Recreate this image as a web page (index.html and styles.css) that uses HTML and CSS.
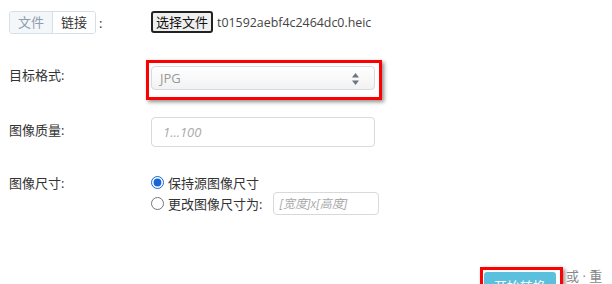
FILE: index.html
```html
<!DOCTYPE html>
<html lang="zh-CN">
<head>
  <meta charset="UTF-8">
  <title>图片格式转换</title>
  <link rel="stylesheet" href="styles.css">
</head>
<body>

  <form class="convert-form">
    <div class="row row-file">
      <div class="label">
        <div class="tabs">
          <span class="tab">文件</span>
          <span class="tab active">链接</span>
        </div>
        <span class="colon">:</span>
      </div>
      <div class="control">
        <span class="file-btn">选择文件</span>
        <span class="file-name">t01592aebf4c2464dc0.heic</span>
      </div>
    </div>

    <div class="row row-format">
      <div class="label">目标格式:</div>
      <div class="control">
        <div class="highlight">
          <div class="select">
            <span class="select-value">JPG</span>
            <svg class="select-arrows" width="7" height="12" viewBox="0 0 7 12">
              <path d="M3.5 0 L7 4.5 L0 4.5 Z" fill="#6b7480"/>
              <path d="M3.5 12 L7 7.5 L0 7.5 Z" fill="#6b7480"/>
            </svg>
          </div>
        </div>
      </div>
    </div>

    <div class="row row-quality">
      <div class="label">图像质量:</div>
      <div class="control">
        <input class="text-input quality" type="text" placeholder="1...100">
      </div>
    </div>

    <div class="row row-size">
      <div class="label">图像尺寸:</div>
      <div class="control radios">
        <label class="radio"><input type="radio" name="size" checked>保持源图像尺寸</label>
        <label class="radio"><input type="radio" name="size">更改图像尺寸为:
          <input class="text-input small" type="text" placeholder="[宽度]x[高度]">
        </label>
      </div>
    </div>

    <div class="row row-submit">
      <div class="highlight submit-box">
        <span class="btn-submit">开始转换</span>
      </div>
      <span class="reset">或 · 重置</span>
    </div>
  </form>

</body>
</html>
```

FILE: styles.css
```css
body {
  margin: 0;
  font-family: "Open Sans", "Noto Sans CJK SC", sans-serif;
  font-size: 13px;
  color: #333;
  background: #fff;
  height: 284px;
  overflow: hidden;
}

.convert-form {
  padding: 11px 0 0 9px;
}

.row {
  display: flex;
  align-items: flex-start;
}

.label {
  width: 142px;
  flex-shrink: 0;
  display: flex;
  align-items: center;
}

/* tabs */
.tabs {
  display: flex;
  border: 1px solid #d6dee6;
  border-radius: 3px;
  overflow: hidden;
}

.tab {
  display: block;
  padding: 0 8px;
  height: 21px;
  line-height: 21px;
  color: #333;
  background: #fff;
}

.tab:first-child {
  color: #8d9db0;
  background: #f4f7f9;
  border-right: 1px solid #d6dee6;
}

.colon {
  margin-left: 3px;
}

.control {
  display: flex;
  align-items: center;
}

.file-btn {
  display: inline-block;
  height: 18px;
  line-height: 18px;
  padding: 0 3px;
  border: 2px solid #222;
  border-radius: 3px;
  background: #efefef;
  color: #111;
}

.file-name {
  margin-left: 4px;
  color: #444;
  font-size: 12.4px;
}

/* format */
.row-format {
  margin-top: 26px;
}

.row-format .label {
  padding-top: 5px;
}

.highlight {
  border: 3px solid #f00;
  box-shadow: 2px 2px 4px rgba(0, 0, 0, 0.45);
}

.row-format .highlight {
  margin-left: -5px;
  padding: 3px 4px 7px 2px;
}

.select {
  position: relative;
  width: 222px;
  height: 22px;
  border: 1px solid #d3dbe3;
  border-radius: 4px;
  background: linear-gradient(#fff, #f2f2f2);
  display: flex;
  align-items: center;
}

.select-value {
  margin-left: 8px;
  color: #999;
}

.select-arrows {
  position: absolute;
  right: 15px;
  top: 6px;
}

/* quality */
.row-quality {
  margin-top: 17px;
}

.row-quality .label {
  padding-top: 3px;
}

.text-input {
  box-sizing: border-box;
  border: 1px solid #d9d9d9;
  border-radius: 4px;
  font-family: "Open Sans", "Noto Sans CJK SC", sans-serif;
  font-size: 13px;
  outline: none;
}

.text-input::placeholder {
  color: #aaa;
  font-style: italic;
}

.quality {
  width: 224px;
  height: 30px;
  padding: 0 11px;
}

/* size */
.row-size {
  margin-top: 25px;
}

.row-size .label {
  height: 21px;
}

.radios {
  flex-direction: column;
  align-items: flex-start;
}

.radio {
  display: flex;
  align-items: center;
  height: 21px;
}

.radio input[type="radio"] {
  margin: 0 4px 0 0;
  width: 13px;
  height: 13px;
  accent-color: #1766d6;
}

.small {
  width: 106px;
  height: 23px;
  margin-left: 11px;
  padding: 0 5px;
  font-size: 12px;
}

/* submit */
.row-submit {
  margin-top: 52px;
  padding-left: 471px;
  align-items: center;
}

.submit-box {
  padding: 2px 4px 0 1px;
}

.btn-submit {
  display: block;
  width: 72px;
  height: 28px;
  line-height: 28px;
  text-align: center;
  background: #5bc0de;
  color: #fff;
  border-radius: 3px;
}

.reset {
  margin-left: 3px;
  color: #888;
}
```
